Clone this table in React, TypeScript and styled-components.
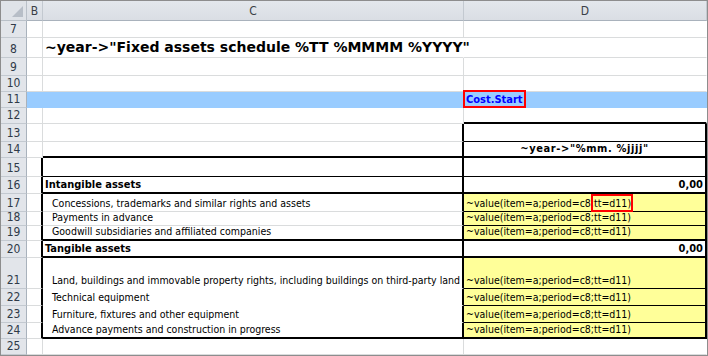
import React from 'react';
import styled, { createGlobalStyle } from 'styled-components';

const Global = createGlobalStyle`
  html, body { margin: 0; padding: 0; background: #fff; }
  body {
    font-family: "DejaVu Sans Condensed", "DejaVu Sans", sans-serif;
    font-stretch: condensed;
  }
`;

type Line = 'grid' | 'none' | 'thin' | 'thick';
type Align = 'left' | 'center' | 'right';

const line = (l: Line) => {
  switch (l) {
    case 'grid':
      return '1px solid #dadcdd';
    case 'none':
      return '1px solid transparent';
    case 'thin':
      return '1px solid #000';
    case 'thick':
      return '2px solid #000';
  }
};

const HEIGHTS = [20, 17, 20, 18, 16, 16, 16, 18, 16, 19, 17, 18, 14, 15, 17, 31, 17, 17, 16];

const Sheet = styled.div`
  box-sizing: border-box;
  width: 708px;
  height: 356px;
  border: 1px solid #8d8d8d;
  display: grid;
  grid-template-columns: 26px 16px 421px 243px;
  grid-template-rows: ${HEIGHTS.map((h) => `${h}px`).join(' ')} 1fr;
  overflow: hidden;
  background: #fff;
`;

const Corner = styled.div`
  box-sizing: border-box;
  position: relative;
  background: #dfe3e8;
  border-right: 1px solid #b9c0c8;
  border-bottom: 1px solid #b9c0c8;
  &::after {
    content: '';
    position: absolute;
    right: 3px;
    bottom: 3px;
    width: 0;
    height: 0;
    border-left: 11px solid transparent;
    border-bottom: 11px solid #b7bec7;
  }
`;

const ColHead = styled.div`
  box-sizing: border-box;
  background: linear-gradient(#e3e7ec, #dadee4);
  border-right: 1px solid #c3c9d0;
  border-bottom: 1px solid #a9b2bc;
  display: flex;
  align-items: center;
  justify-content: center;
  font-size: 12px;
  color: #3a3f46;
  padding-top: 1px;
`;

const RowHead = styled.div`
  box-sizing: border-box;
  background: #e2e5ea;
  border-right: 1px solid #a9b2bc;
  border-bottom: 1px solid #c3c9d0;
  display: flex;
  align-items: flex-end;
  justify-content: center;
  font-size: 12px;
  line-height: 14px;
  color: #2f3a48;
  padding-bottom: 1px;
`;

const Cell = styled.div<{
  $bottom: Line;
  $right: Line;
  $fill: string;
  $align: Align;
  $indent: number;
}>`
  box-sizing: border-box;
  min-width: 0;
  background: ${(p) => p.$fill};
  border-right: ${(p) => line(p.$right)};
  border-bottom: ${(p) => line(p.$bottom)};
  display: flex;
  align-items: flex-end;
  justify-content: ${(p) => (p.$align === 'left' ? 'flex-start' : p.$align === 'right' ? 'flex-end' : 'center')};
  padding: 0 2px 1px ${(p) => 2 + p.$indent}px;
  white-space: nowrap;
  overflow: visible;
  position: relative;
`;

const Text = styled.span<{ $bold?: boolean; $spread?: number }>`
  font-size: ${(p) => (p.$bold ? 11 : 10.5)}px;
  line-height: 13px;
  font-weight: ${(p) => (p.$bold ? 700 : 400)};
  letter-spacing: ${(p) => p.$spread ?? 0}px;
  color: #000;
`;

const Title = styled.span`
  font-family: "DejaVu Sans", sans-serif;
  font-stretch: normal;
  font-size: 14px;
  line-height: 17px;
  font-weight: 700;
  color: #000;
  position: relative;
  z-index: 1;
`;

const Flag = styled.span`
  position: relative;
  &::before {
    content: '';
    position: absolute;
    left: -3px;
    right: -2px;
    top: -3px;
    bottom: -3px;
    border: 2px solid #ff0000;
  }
`;

const CostFlag = styled.span`
  position: relative;
  font-size: 11px;
  line-height: 13px;
  font-weight: 700;
  color: #0000ff;
  &::before {
    content: '';
    position: absolute;
    left: -3px;
    right: -3px;
    top: -3px;
    bottom: -2px;
    border: 2px solid #ff0000;
  }
`;

interface CellDef {
  content?: React.ReactNode;
  bottom?: Line;
  right?: Line;
  fill?: string;
  align?: Align;
  indent?: number;
}

interface RowDef {
  n: number;
  b?: CellDef;
  c?: CellDef;
  d?: CellDef;
}

const YELLOW = '#ffff99';
const BLUE = '#99ccff';

const formula = <Text>~value(item=a;period=c8;tt=d11)</Text>;
const formulaFlag = (
  <Text>
    ~value(item=a;period=c8;<Flag>tt=d11)</Flag>
  </Text>
);

const tableB: CellDef = { right: 'thick' };
const item = (label: string, bottom: Line): CellDef => ({
  content: <Text>{label}</Text>,
  indent: 7,
  bottom,
  right: 'thick',
});
const yellow = (bottom: Line, content: React.ReactNode = formula): CellDef => ({
  content,
  fill: YELLOW,
  bottom,
  right: 'thick',
});

const ROWS: RowDef[] = [
  { n: 7 },
  {
    n: 8,
    c: {
      content: <Title>~year-&gt;"Fixed assets schedule %TT %MMMM %YYYY"</Title>,
      right: 'none',
    },
  },
  { n: 9 },
  { n: 10 },
  {
    n: 11,
    b: { fill: BLUE, right: 'none', bottom: 'none' },
    c: { fill: BLUE, right: 'none', bottom: 'none' },
    d: { fill: BLUE, right: 'none', bottom: 'none', content: <CostFlag>Cost.Start</CostFlag> },
  },
  { n: 12, d: { bottom: 'thick', right: 'none' } },
  { n: 13, c: { right: 'thick' }, d: { bottom: 'thin', right: 'thick' } },
  {
    n: 14,
    c: { right: 'thick', bottom: 'thick' },
    d: {
      content: (
        <Text $bold $spread={0.6}>
          ~year-&gt;"%mm. %jjjj"
        </Text>
      ),
      align: 'center',
      bottom: 'thick',
      right: 'thick',
    },
  },
  { n: 15, b: tableB, c: { bottom: 'thin', right: 'thick' }, d: { bottom: 'thin', right: 'thick' } },
  {
    n: 16,
    b: tableB,
    c: { content: <Text $bold>Intangible assets</Text>, bottom: 'thick', right: 'thick' },
    d: { content: <Text $bold>0,00</Text>, align: 'right', bottom: 'thick', right: 'thick' },
  },
  {
    n: 17,
    b: tableB,
    c: item('Concessions, trademarks and similar rights and assets', 'grid'),
    d: yellow('thin', formulaFlag),
  },
  { n: 18, b: tableB, c: item('Payments in advance', 'grid'), d: yellow('thin') },
  {
    n: 19,
    b: tableB,
    c: item('Goodwill subsidiaries and affiliated companies', 'thick'),
    d: yellow('thick'),
  },
  {
    n: 20,
    b: tableB,
    c: { content: <Text $bold>Tangible assets</Text>, bottom: 'thick', right: 'thick' },
    d: { content: <Text $bold>0,00</Text>, align: 'right', bottom: 'thick', right: 'thick' },
  },
  {
    n: 21,
    b: tableB,
    c: item('Land, buildings and immovable property rights, including buildings on third-party land', 'none'),
    d: yellow('thin'),
  },
  { n: 22, b: tableB, c: item('Technical equipment', 'none'), d: yellow('thin') },
  { n: 23, b: tableB, c: item('Furniture, fixtures and other equipment', 'none'), d: yellow('thin') },
  {
    n: 24,
    b: tableB,
    c: item('Advance payments and construction in progress', 'thick'),
    d: yellow('thick'),
  },
  { n: 25 },
];

const renderCell = (key: string, def: CellDef = {}, defaultRight: Line = 'grid') => (
  <Cell
    key={key}
    $bottom={def.bottom ?? 'grid'}
    $right={def.right ?? defaultRight}
    $fill={def.fill ?? '#fff'}
    $align={def.align ?? 'left'}
    $indent={def.indent ?? 0}
  >
    {def.content}
  </Cell>
);

export default function App() {
  return (
    <>
      <Global />
      <Sheet>
        <Corner />
        <ColHead>B</ColHead>
        <ColHead>C</ColHead>
        <ColHead>D</ColHead>
        {ROWS.map((r) => (
          <React.Fragment key={r.n}>
            <RowHead>{r.n}</RowHead>
            {renderCell(`b${r.n}`, r.b)}
            {renderCell(`c${r.n}`, r.c)}
            {renderCell(`d${r.n}`, r.d, 'none')}
          </React.Fragment>
        ))}
      </Sheet>
    </>
  );
}
